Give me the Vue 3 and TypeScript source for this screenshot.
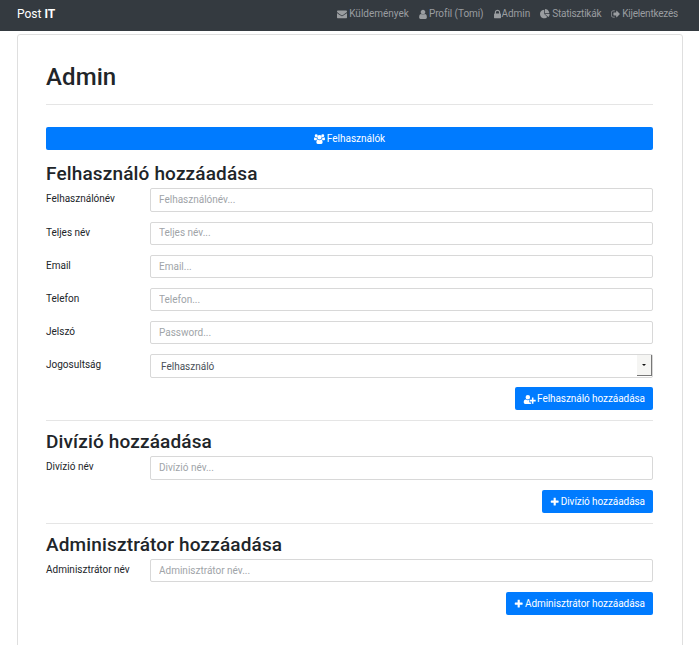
<script setup lang="ts">
interface Icon { box: string; width: number; path: string }

const icons: Record<string, Icon> = {
  envelope: { box: '0 0 1792 1792', width: 10, path: 'M1792 710v794q0 66-47 113t-113 47h-1472q-66 0-113-47t-47-113v-794q44 49 101 87 362 246 497 345 57 42 92.5 65.5t94.5 48 110 24.5h2q51 0 110-24.5t94.5-48 92.5-65.5q170-123 498-345 57-39 100-87zm0-294q0 79-49 151t-122 123q-376 261-468 325-10 7-42.5 31t-54 38.5-52 32.5-57.5 27-50 9h-2q-23 0-50-9t-57.5-27-52-32.5-54-38.5-42.5-31q-91-64-262-182.5t-205-142.5q-62-42-117-115.5t-55-136.5q0-78 41.5-130t118.5-52h1472q65 0 112.5 47t47.5 113z' },
  user: { box: '256 0 1280 1664', width: 8, path: 'M1536 1399q0 109-62.5 187t-150.5 78h-854q-88 0-150.5-78t-62.5-187q0-85 8.5-160.5t31.5-152 58.5-131 94-89 134.5-34.5q131 128 313 128t313-128q76 0 134.5 34.5t94 89 58.5 131 31.5 152 8.5 160.5zm-256-887q0 159-112.5 271.5t-271.5 112.5-271.5-112.5-112.5-271.5 112.5-271.5 271.5-112.5 271.5 112.5 112.5 271.5z' },
  lock: { box: '320 0 1152 1664', width: 7, path: 'M640 768h512v-192q0-106-75-181t-181-75-181 75-75 181v192zm832 96v576q0 40-28 68t-68 28h-960q-40 0-68-28t-28-68v-576q0-40 28-68t68-28h32v-192q0-184 132-316t316-132 316 132 132 316v192h32q40 0 68 28t28 68z' },
  pie: { box: '0 0 1792 1792', width: 10, path: 'M768 890l546 546q-106 108-247.5 168t-298.5 60q-209 0-385.5-103t-279.5-279.5-103-385.5 103-385.5 279.5-279.5 385.5-103v762zm127 6h833q0 157-60 298.5t-168 247.5zm769-128h-768v-768q209 0 385.5 103t279.5 279.5 103 385.5z' },
  signOut: { box: '0 0 1664 1792', width: 9, path: 'M704 1440q0 4 1 20t.5 26.5-3 23.5-10 19.5-20.5 6.5h-320q-119 0-203.5-84.5t-84.5-203.5v-704q0-119 84.5-203.5t203.5-84.5h320q13 0 22.5 9.5t9.5 22.5q0 4 1 20t.5 26.5-3 23.5-10 19.5-20.5 6.5h-320q-66 0-113 47t-47 113v704q0 66 47 113t113 47h312l11.5 1 11.5 3 8 5.5 7 9 2 13.5zm928-544q0 26-19 45l-544 544q-19 19-45 19t-45-19-19-45v-288h-448q-26 0-45-19t-19-45v-384q0-26 19-45t45-19h448v-288q0-26 19-45t45-19 45 19l544 544q19 19 19 45z' },
  users: { box: '0 0 1920 1792', width: 11, path: 'M384 0a256 256 0 1 1 0 512a256 256 0 1 1 0-512zM1536 0a256 256 0 1 1 0 512a256 256 0 1 1 0-512zM960 128a384 384 0 1 1 0 768a384 384 0 1 1 0-768zM593 896q-162 5-265 128h-134q-82 0-138-40t-56-119q0-353 124-353q10 0 62 32t132 34q76 0 128-26q-2 39-2 60q0 150 149 284zM1327 896q162 5 265 128h134q82 0 138-40t56-119q0-353-124-353q-10 0-62 32t-132 34q-76 0-128-26q2 39 2 60q0 150-149 284zM662 896q128 118 298 118t298-118q115 0 178 115t63 406q0 247-239 247h-600q-239 0-239-247q0-291 63-406t178-115z' },
  userPlus: { box: '-120 0 2048 1664', width: 12, path: 'M704 128a384 384 0 1 1 0 768a384 384 0 1 1 0-768zM1664 960h352q32 0 32 32v224q0 32-32 32h-352v352q0 32-32 32h-192q-32 0-32-32v-352h-352q-32 0-32-32v-224q0-32 32-32h352v-352q0-32 32-32h192q32 0 32 32zM928 1248q0 160 128 160h224v234q-45 22-110 22h-910q-260 0-260-260q0-508 338-508q24 0 55 27q145 101 311 101t311-101q31-27 56-27q74 0 126 32h-141q-128 0-128 128z' },
  plus: { box: '60 0 1600 1792', width: 9, path: 'M1600 736v192q0 40-28 68t-68 28h-416v416q0 40-28 68t-68 28h-192q-40 0-68-28t-28-68v-416h-416q-40 0-68-28t-28-68v-192q0-40 28-68t68-28h416v-416q0-40 28-68t68-28h192q40 0 68 28t28 68v416h416q40 0 68 28t28 68z' },
}

const links = [
  { icon: 'envelope', text: 'Küldemények' },
  { icon: 'user', text: 'Profil (Tomi)' },
  { icon: 'lock', text: 'Admin' },
  { icon: 'pie', text: 'Statisztikák' },
  { icon: 'signOut', text: 'Kijelentkezés' },
]

const sections = [
  {
    title: 'Felhasználó hozzáadása', icon: 'userPlus', role: true,
    fields: [
      { label: 'Felhasználónév', hint: 'Felhasználónév...' },
      { label: 'Teljes név', hint: 'Teljes név...' },
      { label: 'Email', hint: 'Email...' },
      { label: 'Telefon', hint: 'Telefon...' },
      { label: 'Jelszó', hint: 'Password...' },
    ],
  },
  { title: 'Divízió hozzáadása', icon: 'plus', role: false, fields: [{ label: 'Divízió név', hint: 'Divízió név...' }] },
  { title: 'Adminisztrátor hozzáadása', icon: 'plus', role: false, fields: [{ label: 'Adminisztrátor név', hint: 'Adminisztrátor név...' }] },
]
</script>

<template>
  <div class="page">
    <nav class="navbar">
      <a class="brand">Post <b>IT</b></a>
      <div class="links">
        <a v-for="l in links" :key="l.text" class="link" :class="l.icon">
          <svg class="icon" :viewBox="icons[l.icon].box" :width="icons[l.icon].width" height="10"><path :d="icons[l.icon].path" /></svg>
          <span>{{ l.text }}</span>
        </a>
      </div>
    </nav>
    <main class="card">
      <h1>Admin</h1>
      <button class="btn wide">
        <svg class="icon" :viewBox="icons.users.box" :width="icons.users.width" height="11"><path :d="icons.users.path" /></svg>
        <span>Felhasználók</span>
      </button>
      <section v-for="s in sections" :key="s.title">
        <h2>{{ s.title }}</h2>
        <div v-for="f in s.fields" :key="f.label" class="row">
          <label>{{ f.label }}</label>
          <input :placeholder="f.hint" />
        </div>
        <div v-if="s.role" class="row">
          <label>Jogosultság</label>
          <div class="select"><span>Felhasználó</span><i class="drop"><i class="arrow"></i></i></div>
        </div>
        <button class="btn submit">
          <svg class="icon" :viewBox="icons[s.icon].box" :width="icons[s.icon].width" height="10"><path :d="icons[s.icon].path" /></svg>
          <span>{{ s.title }}</span>
        </button>
      </section>
    </main>
  </div>
</template>

<style>
body { margin: 0; background: #fff; overflow: hidden; }
</style>

<style scoped>
* { box-sizing: border-box; }
.page { height: 645px; overflow: hidden; font: 400 10px/15px Roboto, sans-serif; color: #212529; }
.navbar { height: 31px; background: #343a40; display: flex; justify-content: space-between; align-items: flex-start; padding: 6px 21px 0 17px; }
.brand { font-size: 12px; line-height: 16px; color: #fff; }
.links { display: flex; gap: 10px; color: #9a9da0; }
.link { display: flex; gap: 2px; white-space: nowrap; }
.link.user { letter-spacing: -.06px; }
.link.lock { gap: 1px; letter-spacing: -.05px; }
.link.pie { letter-spacing: -.22px; }
.link.signOut { letter-spacing: -.22px; }
.icon { flex: none; fill: currentColor; margin-top: 3px; overflow: visible; }
.card { margin: 3px 16px 0 17px; height: 640px; border: 1px solid #dfdfdf; border-radius: 3px; padding: 27px 29px 0 28px; }
h1 { margin: 0 0 22px; height: 43px; border-bottom: 1px solid #e5e5e5; font-size: 24px; line-height: 30px; font-weight: 500; letter-spacing: .1px; }
.btn { font: inherit; color: #fff; background: #007bff; border: 0; border-radius: 2px; height: 23px; padding: 4px 8px 0; display: flex; align-items: flex-start; justify-content: center; gap: 2px; white-space: nowrap; }
.wide { width: 100%; }
.submit { margin-left: auto; letter-spacing: -.07px; }
section { padding-top: 12px; }
h2 { margin: 0 0 3.4px; font-size: 19px; line-height: 23px; font-weight: 500; letter-spacing: .15px; }
.row { display: flex; height: 23.4px; margin-bottom: 9.77px; }
section + section { margin-top: 10px; padding-top: 9px; border-top: 1px solid #e5e5e5; }
section + section h2 { margin-bottom: 3px; }
section + section .row { margin-bottom: 10.2px; }
label { width: 104px; padding-top: 3px; }
input, .select { flex: 1; min-width: 0; border: 1px solid #d8d8d8; border-radius: 2px; background: #fff; font: inherit; color: #495057; padding: 0 8px .6px; outline: 0; }
input::placeholder { color: #a0a4a8; opacity: 1; }
.select { display: flex; justify-content: space-between; padding: 0 0 0 10px; line-height: 23px; }
.drop { width: 15px; height: 21px; background: #f5f5f3; border-right: 1px solid #777; border-bottom: 1px solid #777; display: flex; align-items: center; justify-content: center; }
.arrow { border: 2px solid transparent; border-top-color: #111; border-bottom: 0; }
</style>
